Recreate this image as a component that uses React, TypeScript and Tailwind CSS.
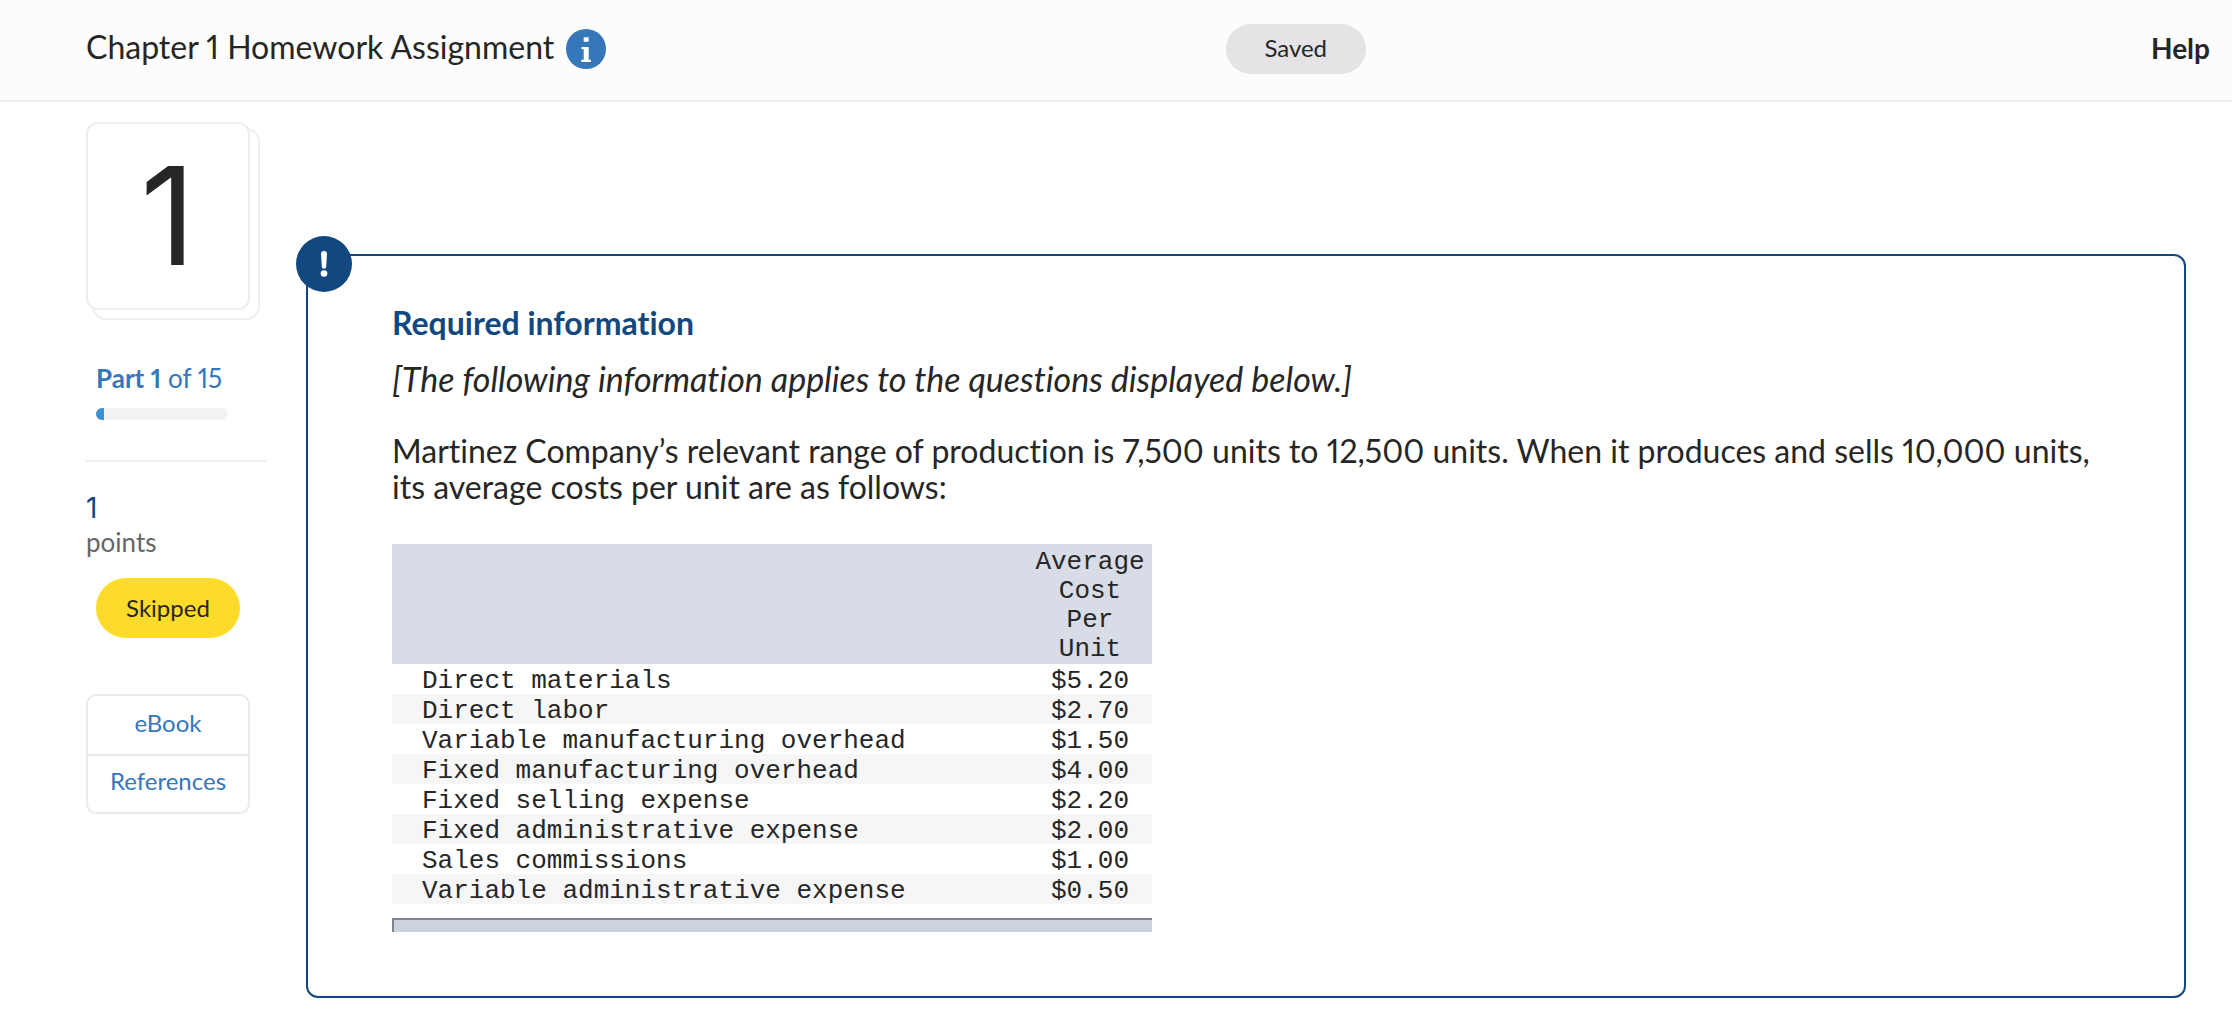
const costs = [
    { name: "Direct materials", cost: "$5.20" },
    { name: "Direct labor", cost: "$2.70" },
    { name: "Variable manufacturing overhead", cost: "$1.50" },
    { name: "Fixed manufacturing overhead", cost: "$4.00" },
    { name: "Fixed selling expense", cost: "$2.20" },
    { name: "Fixed administrative expense", cost: "$2.00" },
    { name: "Sales commissions", cost: "$1.00" },
    { name: "Variable administrative expense", cost: "$0.50" },
];

const InfoIcon = () => (
    <svg viewBox="0 0 40 40" className="size-10" aria-hidden="true">
        <circle cx="20" cy="20" r="20" fill="#3577b9" />
        <path d="M17.7 8.2h5v4.6h-5z M15.5 18h7.2v12.8h2.3v2.2h-9.8v-2.2h2.5v-10.6h-2.2z" fill="#fff" />
    </svg>
);

const AlertIcon = () => (
    <svg viewBox="0 0 56 56" className="size-14" aria-hidden="true">
        <circle cx="28" cy="28" r="28" fill="#124880" />
        <path d="M25 18a3 3 0 0 1 6 0l-.8 12.5a2.2 2.2 0 0 1-4.4 0z" fill="#fff" />
        <circle cx="28" cy="37.5" r="3.3" fill="#fff" />
    </svg>
);

const Header = () => (
    <header className="grid grid-cols-[27fr_140px_20fr] items-start border-b-2 border-[#eeeeee] bg-[#fcfcfc] pt-6 pb-[26px] pr-[22px] pl-[86px]">
        <div className="flex h-[50px] items-center gap-3">
            <h1 className="pb-1 text-[32px] leading-9">Chapter 1 Homework Assignment</h1>
            <button type="button" aria-label="Assignment details">
                <InfoIcon />
            </button>
        </div>
        <div className="flex h-[50px] items-center justify-center rounded-full bg-[#e5e3e6] pb-0.5 text-[24px]">
            Saved
        </div>
        <div className="flex h-[50px] items-center justify-end pb-0.5">
            <a href="#help" className="text-[28px] font-bold">Help</a>
        </div>
    </header>
);

const QuestionNumber = () => (
    <div className="relative h-[198px] w-[174px]">
        <div className="absolute right-0 bottom-0 h-[192px] w-[168px] rounded-[14px] border-2 border-[#eeeeee]" />
        <div className="relative flex h-[188px] w-[164px] items-center justify-center rounded-[12px] border-2 border-[#eeeeee] bg-white font-[Inter,sans-serif] text-[136px] leading-none">
            1
        </div>
    </div>
);

const Sidebar = () => (
    <aside className="w-[180px] shrink-0">
        <QuestionNumber />

        <div className="mt-[42px] ml-[10px] text-[#3577b9]">
            <p className="text-[26px] leading-8">
                <b>Part 1</b> of 15
            </p>
            <div className="mt-[14px] h-3 w-[132px] overflow-hidden rounded-full bg-[#f2f2f2]">
                <div className="h-full w-2 bg-[#3f8fd4]" />
            </div>
        </div>

        <hr className="mt-10 border-t-2 border-[#eeeeee]" />

        <p className="mt-[30px] font-[Inter,sans-serif] text-[28px] leading-8 text-[#124880]">1</p>
        <p className="text-[26px] leading-9 text-[#666666]">points</p>
        <div className="mt-[18px] ml-[10px] flex h-[60px] w-36 items-center justify-center rounded-full bg-[#fddb2a] text-[24px]">
            Skipped
        </div>

        <nav className="mt-14 w-[164px] divide-y-2 divide-[#eaeaea] rounded-[10px] border-2 border-[#eaeaea] text-center text-[24px] text-[#3577b9]">
            <a href="#ebook" className="block pt-[10px] pb-[14px] leading-[34px]">eBook</a>
            <a href="#references" className="block pt-2 pb-[14px] leading-[34px]">References</a>
        </nav>
    </aside>
);

const CostTable = () => (
    <div className="w-[760px] font-['Liberation_Mono',monospace] text-[26px] leading-[30px]">
        <table className="w-full">
            <thead>
                <tr className="bg-[#d8dce7]">
                    <td></td>
                    <th scope="col" className="w-[124px] pt-1 leading-[29px] font-normal">
                        Average Cost Per<br />Unit
                    </th>
                </tr>
            </thead>
            <tbody className="leading-[26px]">
                {costs.map((row) => (
                    <tr key={row.name} className="even:bg-[#f6f6f6]">
                        <td className="pt-1 pl-[30px]">{row.name}</td>
                        <td className="pt-1 text-center">{row.cost}</td>
                    </tr>
                ))}
            </tbody>
        </table>
        <div className="mt-[14px] h-[14px] border-t-2 border-l-2 border-[#80858d] bg-[#ccd3df]" />
    </div>
);

const RequiredInfo = () => (
    <section className="relative mt-[132px] min-w-0 flex-1 rounded-[12px] border-2 border-[#124880] pt-[49px] pr-[84px] pb-16 pl-[84px]">
        <div className="absolute -top-5 -left-3">
            <AlertIcon />
        </div>
        <h2 className="text-[32px] leading-9 font-bold text-[#124880]">Required information</h2>
        <p className="mt-5 text-[34px] leading-9 italic">
            [The following information applies to the questions displayed below.]
        </p>
        <p className="mt-9 mb-[39px] text-[32px] leading-9">
            Martinez Company’s relevant range of production is 7,500 units to 12,500 units. When it
            produces and sells 10,000 units, its average costs per unit are as follows:
        </p>
        <CostTable />
    </section>
);

const App = () => {
    return (
        <div className="min-h-screen bg-white font-[Lato,sans-serif] text-[#262626] proportional-nums [font-variant-ligatures:none]">
            <Header />
            <main className="flex items-start gap-10 pr-[46px] pb-6 pl-[86px]">
                <div className="pt-5">
                    <Sidebar />
                </div>
                <div className="flex min-w-0 flex-1 pt-5">
                    <RequiredInfo />
                </div>
            </main>
        </div>
    );
};

export default App;
